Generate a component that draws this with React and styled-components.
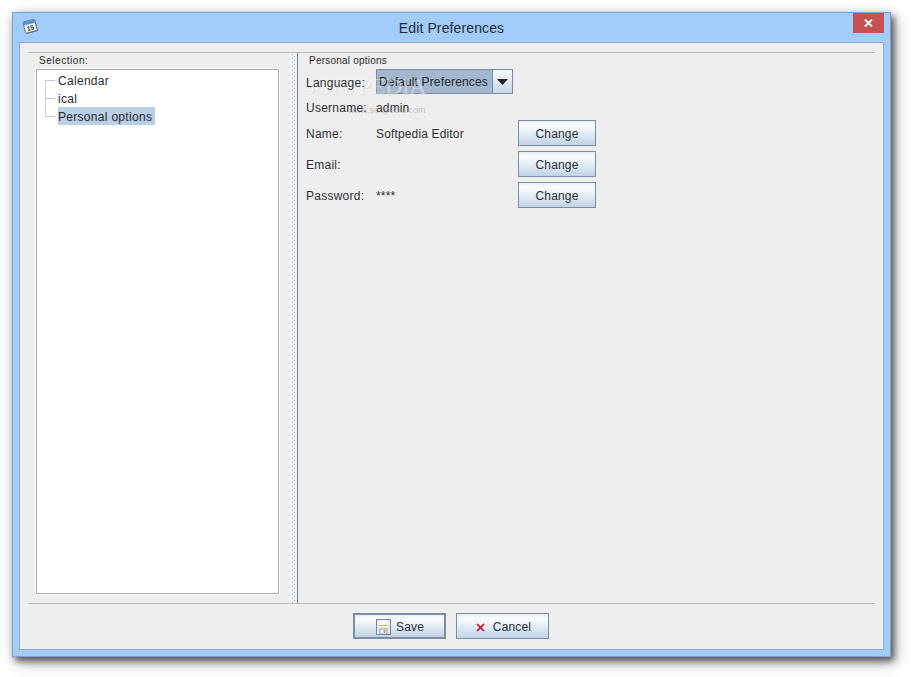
import React from "react";
import styled, { createGlobalStyle } from "styled-components";

const Global = createGlobalStyle`
  html, body { margin: 0; padding: 0; background: #fff; }
  body { font-family: "Liberation Sans", Arial, sans-serif; }
  * { box-sizing: border-box; }
`;

const Page = styled.div`
  width: 911px;
  height: 677px;
  padding: 12px 20px 20px 12px;
  overflow: hidden;
`;

const Win = styled.div`
  width: 879px;
  height: 645px;
  background: #a2ccfa;
  border: 1px solid #7fa3cf;
  box-shadow: 3px 4px 7px rgba(0, 0, 0, 0.6), 4px 5px 16px rgba(0, 0, 0, 0.28);
  display: flex;
  flex-direction: column;
  padding: 0 6px 6px;
`;

const TitleBar = styled.header`
  position: relative;
  height: 29px;
  flex: none;
  display: flex;
  align-items: center;
  justify-content: center;
`;

const TitleIcon = styled.svg`
  position: absolute;
  left: 3px;
  top: 5px;
`;

const TitleText = styled.h1`
  margin: 0;
  font-size: 14px;
  font-weight: 400;
  letter-spacing: 0.12px;
  color: #1f2a36;
  line-height: 30px;
  font-family: "Liberation Sans", sans-serif;
`;

const CloseBtn = styled.button`
  position: absolute;
  right: 0;
  top: 0;
  width: 31px;
  height: 20px;
  padding: 0;
  border: 0;
  background: #c75050;
  display: flex;
  align-items: center;
  justify-content: center;
`;

const Client = styled.div`
  flex: 1;
  min-height: 0;
  background: #eeeeee;
  border: 1px solid #8fabd0;
  display: flex;
  flex-direction: column;
  padding: 9px 8px 0;
`;

const Split = styled.div`
  height: 552px;
  flex: none;
  border-top: 1px solid #bcbcbc;
  border-bottom: 1px solid #bcbcbc;
  display: flex;
`;

const Left = styled.section`
  width: 261px;
  flex: none;
  padding: 2px 0 9px 8px;
  display: flex;
  flex-direction: column;
`;

const Legend = styled.div`
  font-size: 10px;
  letter-spacing: 0.55px;
  line-height: 12px;
  color: #2a2a2a;
  padding-left: 3px;
  height: 14px;
`;

const TreeBox = styled.div`
  width: 243px;
  flex: 1;
  background: #fff;
  border: 1px solid #adadad;
  outline: 1px solid #fafafa;
  padding: 1px 0 0 8px;
  position: relative;
`;

const TreeRow = styled.div`
  height: 18px;
  display: flex;
  align-items: center;
`;

const Branch = styled.span`
  width: 10px;
  height: 1px;
  margin-right: 3px;
  background: #b4c8de;
  flex: none;
`;

const Trunk = styled.span`
  position: absolute;
  left: 8px;
  top: 10px;
  width: 1px;
  height: 37px;
  background: #c4d4e6;
`;

const TreeLabel = styled.span`
  font-size: 12px;
  color: #2a2a32;
  line-height: 16px;
  padding: 2px 3px 0 0;
  letter-spacing: 0.3px;
  background: ${(p) => (p.$sel ? "#b8cfe5" : "transparent")};
`;

const Divider = styled.div`
  width: 9px;
  flex: none;
  background:
    radial-gradient(circle at 0.5px 0.5px, #8a9db4 0.7px, transparent 1px) 3px 1px / 2px 4px repeat-y,
    radial-gradient(circle at 0.5px 0.5px, #8a9db4 0.7px, transparent 1px) 5px 3px / 2px 4px repeat-y,
    #f6f6f6;
  border-right: 1px solid #6b7f96;
`;

const Right = styled.section`
  flex: 1;
  position: relative;
  padding: 2px 0 0 8px;
  display: flex;
  flex-direction: column;
`;

const OptionsLegend = styled(Legend)`
  letter-spacing: 0.22px;
  height: 13px;
`;

const FormRow = styled.div`
  display: flex;
  align-items: center;
  height: ${(p) => p.$h}px;
  margin-top: ${(p) => p.$mt || 0}px;
`;

const Label = styled.span`
  position: relative;
  z-index: 2;
  width: 70px;
  flex: none;
  padding-top: 2px;
  font-size: 12px;
  color: #2e2e36;
  letter-spacing: 0.25px;
`;

const Value = styled.span`
  width: 142px;
  flex: none;
  padding-top: 2px;
  font-size: 12px;
  color: #2e2e36;
  letter-spacing: 0.15px;
`;

const Combo = styled.div`
  width: 137px;
  height: 25px;
  display: flex;
  border: 1px solid #7c8ea3;
  background: linear-gradient(#f7fafd, #c6d6e8);
`;

const ComboText = styled.span`
  flex: 1;
  background: #a3b8cf;
  border-right: 1px solid #7c8ea3;
  font-size: 12px;
  color: #22262c;
  letter-spacing: 0.15px;
  line-height: 25px;
  padding-left: 2px;
  white-space: nowrap;
`;

const ComboArrow = styled.span`
  width: 19px;
  flex: none;
  display: flex;
  align-items: center;
  justify-content: center;
`;

const Button = styled.button`
  width: ${(p) => p.$w}px;
  height: 26px;
  padding: 2px 0 0 ${(p) => p.$pl || 0}px;
  border: ${(p) => (p.$def ? 2 : 1)}px solid #7d8ea2;
  background: linear-gradient(#e6eef6 0%, #fbfdff 18%, #e8f0f8 45%, #c0d2e6 100%);
  font-family: "Liberation Sans", sans-serif;
  font-size: 12px;
  letter-spacing: 0.15px;
  color: #2a2e36;
  display: flex;
  align-items: center;
  justify-content: center;
  gap: ${(p) => p.$gap || 0}px;
`;

const Watermark = styled.span`
  position: absolute;
  z-index: 1;
  left: 4px;
  top: 20px;
  font-family: "Liberation Serif", serif;
  font-size: 24px;
  letter-spacing: -0.6px;
  color: rgba(255, 255, 255, 0.42);
  text-shadow: 1px 1px 0 rgba(170, 170, 170, 0.18);
  pointer-events: none;
  white-space: nowrap;
`;

const WatermarkUrl = styled.span`
  position: absolute;
  z-index: 1;
  left: 50px;
  top: 52px;
  font-size: 9px;
  color: rgba(150, 150, 150, 0.5);
  pointer-events: none;
  white-space: nowrap;
`;

const Footer = styled.footer`
  flex: 1;
  display: flex;
  justify-content: center;
  gap: 10px;
  padding: 9px 2px 0 0;
`;

const CalendarIcon = () => (
  <TitleIcon width="16" height="16" viewBox="0 0 16 16">
    <g transform="rotate(-14 8 8)">
      <rect x="2.6" y="3.4" width="12" height="11.5" rx="1" fill="#4a5058" opacity="0.65" />
      <rect x="2" y="2.5" width="12" height="11.5" rx="1" fill="#f2f2f2" stroke="#5d6670" strokeWidth="0.8" />
      <rect x="2.4" y="2.8" width="11.2" height="3.2" fill="#4a98d8" />
      <text x="8" y="12.2" textAnchor="middle" fontSize="6.5" fontWeight="700" fontFamily="Liberation Sans" fill="#333">15</text>
    </g>
  </TitleIcon>
);

const SaveIcon = () => (
  <svg width="15" height="16" viewBox="0 0 15 16">
    <rect x="0.5" y="0.5" width="14" height="15" fill="#e6ebf2" stroke="#6d87ab" />
    <rect x="3" y="1" width="9" height="6" fill="#fbf8ee" />
    <rect x="3" y="6" width="9" height="1" fill="#e2b464" />
    <rect x="4" y="10" width="7" height="5" fill="#f7f7f7" stroke="#7f8b99" strokeWidth="0.8" />
    <rect x="7.5" y="11" width="2" height="3" fill="#d7a04a" />
  </svg>
);

const CancelIcon = () => (
  <svg width="9" height="9" viewBox="0 0 9 9">
    <path d="M1 1 L8 8 M8 1 L1 8" stroke="#d3001c" strokeWidth="1.6" />
  </svg>
);

export default function App() {
  return (
    <Page>
      <Global />
      <Win>
        <TitleBar>
          <CalendarIcon />
          <TitleText>Edit Preferences</TitleText>
          <CloseBtn aria-label="Close">
            <svg width="9" height="8" viewBox="0 0 9 8">
              <path d="M1 0.5 L8 7.5 M8 0.5 L1 7.5" stroke="#fff" strokeWidth="1.9" />
            </svg>
          </CloseBtn>
        </TitleBar>
        <Client>
          <Split>
            <Left>
              <Legend>Selection:</Legend>
              <TreeBox>
                <Trunk />
                <TreeRow><Branch /><TreeLabel>Calendar</TreeLabel></TreeRow>
                <TreeRow><Branch /><TreeLabel>ical</TreeLabel></TreeRow>
                <TreeRow><Branch /><TreeLabel $sel>Personal options</TreeLabel></TreeRow>
              </TreeBox>
            </Left>
            <Divider />
            <Right>
              <Watermark>SOFTPEDIA</Watermark>
              <WatermarkUrl>www.softpedia.com</WatermarkUrl>
              <OptionsLegend>Personal options</OptionsLegend>
              <FormRow $h={25} $mt={1}>
                <Label>Language:</Label>
                <Combo>
                  <ComboText>Default Preferences</ComboText>
                  <ComboArrow>
                    <svg width="11" height="6" viewBox="0 0 11 6"><path d="M0 0 H11 L5.5 6 Z" fill="#222" /></svg>
                  </ComboArrow>
                </Combo>
              </FormRow>
              <FormRow $h={26}>
                <Label>Username:</Label>
                <Value>admin</Value>
              </FormRow>
              <FormRow $h={26}>
                <Label>Name:</Label>
                <Value>Softpedia Editor</Value>
                <Button $w={78}>Change</Button>
              </FormRow>
              <FormRow $h={26} $mt={5}>
                <Label>Email:</Label>
                <Value />
                <Button $w={78}>Change</Button>
              </FormRow>
              <FormRow $h={26} $mt={5}>
                <Label>Password:</Label>
                <Value>****</Value>
                <Button $w={78}>Change</Button>
              </FormRow>
            </Right>
          </Split>
          <Footer>
            <Button $w={93} $def $gap={5} $pl={2}><SaveIcon />Save</Button>
            <Button $w={93} $gap={8} $pl={3}><CancelIcon />Cancel</Button>
          </Footer>
        </Client>
      </Win>
    </Page>
  );
}
